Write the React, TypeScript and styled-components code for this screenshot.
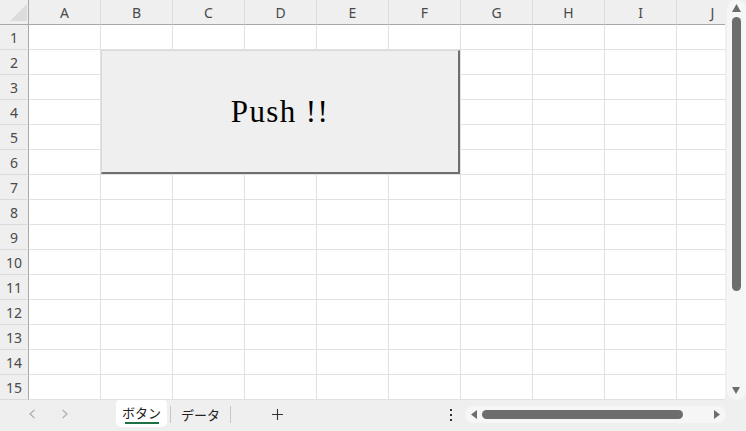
import React from "react";
import styled, { createGlobalStyle } from "styled-components";

const Global = createGlobalStyle`
  html, body { margin: 0; padding: 0; overflow: hidden; background: #efefef; }
  * { box-sizing: border-box; }
`;

const COLS = ["A", "B", "C", "D", "E", "F", "G", "H", "I", "J"];
const ROWS = Array.from({ length: 15 }, (_, i) => i + 1);

const Window = styled.div`
  width: 746px;
  height: 431px;
  display: flex;
  flex-direction: column;
  background: #efefef;
  font-family: "Noto Sans", "Open Sans", sans-serif;
  overflow: hidden;
`;

const Main = styled.div`
  display: flex;
  height: 400px;
`;

const Viewport = styled.div`
  position: relative;
  width: 725px;
  height: 400px;
  overflow: hidden;
  background: #ffffff;
`;

const Grid = styled.div`
  display: grid;
  grid-template-columns: 29px repeat(10, 72px);
  grid-template-rows: 25px repeat(15, 25px);
  width: 749px;
`;

const Corner = styled.div`
  background: #efefef;
  border-right: 1px solid #a8a8a8;
  border-bottom: 1px solid #a8a8a8;
  display: flex;
  align-items: flex-start;
  justify-content: flex-end;
`;

const ColHeader = styled.div`
  background: #efefef;
  border-right: 1px solid #dcdcdc;
  border-bottom: 1px solid #a8a8a8;
  color: #4a4a4a;
  font-size: 14px;
  display: flex;
  align-items: center;
  justify-content: center;
  padding-top: 1px;
`;

const RowHeader = styled.div`
  background: #efefef;
  border-right: 1px solid #a8a8a8;
  border-bottom: 1px solid #dadada;
  color: #4a4a4a;
  font-size: 14px;
  display: flex;
  align-items: center;
  justify-content: center;
  padding-top: 1px;
`;

const Cell = styled.div`
  background: #ffffff;
  border-right: 1px solid #e1e1e1;
  border-bottom: 1px solid #e1e1e1;
`;

const PushButton = styled.button`
  position: absolute;
  left: 101px;
  top: 50px;
  width: 359px;
  height: 124px;
  margin: 0;
  padding: 0;
  background: #efefef;
  border-top: 1px solid #dadada;
  border-left: 1px solid #dadada;
  border-right: 2px solid #6e6e6e;
  border-bottom: 2px solid #6e6e6e;
  font-family: "Liberation Serif", "Times New Roman", serif;
  font-size: 31px;
  letter-spacing: 1.4px;
  color: #000;
  display: flex;
  align-items: center;
  justify-content: center;
  cursor: pointer;
`;

const VScroll = styled.div`
  width: 21px;
  height: 400px;
  padding-left: 2px;
  display: flex;
`;

const VTrack = styled.div`
  width: 19px;
  height: 400px;
  background: #f6f6f6;
  border-radius: 9px;
  display: flex;
  flex-direction: column;
  align-items: center;
  padding-top: 4px;
  padding-right: 1px;
`;

const VThumb = styled.div`
  width: 9px;
  height: 274px;
  margin-top: 5px;
  background: #6d6d6d;
  border-radius: 5px;
`;

const Spacer = styled.div`
  flex: 1;
`;

const BottomArrow = styled.div`
  margin-bottom: 6px;
  display: flex;
`;

const RightArrow = styled.div`
  margin-right: 6px;
  display: flex;
`;

const Bar = styled.div`
  height: 31px;
  display: flex;
  align-items: flex-start;
  background: #efefef;
`;

const Nav = styled.div`
  width: 116px;
  height: 27px;
  display: flex;
  align-items: center;
  padding-left: 28px;
  gap: 25px;
`;

const ActiveTab = styled.div`
  width: 51px;
  height: 28px;
  margin-top: -1px;
  background: #ffffff;
  border-radius: 5px;
  display: flex;
  flex-direction: column;
  align-items: center;
  justify-content: flex-start;
  padding-top: 5px;
  font-family: "Noto Sans CJK JP", sans-serif;
  font-size: 13px;
  color: #222;
  line-height: 17px;
`;

const Underline = styled.div`
  width: 34px;
  height: 2px;
  margin-top: 1px;
  background: #1e7145;
`;

const Sep = styled.div<{ $ml?: number }>`
  width: 1px;
  height: 17px;
  margin-top: 6px;
  margin-left: ${(p) => p.$ml ?? 0}px;
  background: #c6c6c6;
`;

const Tab = styled.div`
  width: 59px;
  height: 27px;
  display: flex;
  align-items: center;
  justify-content: center;
  font-family: "Noto Sans CJK JP", sans-serif;
  font-size: 13px;
  color: #222;
  padding-top: 2px;
`;

const IconSlot = styled.div<{ $w: number; $ml: number }>`
  width: ${(p) => p.$w}px;
  margin-left: ${(p) => p.$ml}px;
  height: 31px;
  display: flex;
  align-items: center;
  justify-content: center;
  padding-bottom: 2px;
`;

const HTrack = styled.div`
  width: 261px;
  height: 17px;
  margin-top: 6px;
  margin-left: 11px;
  background: #f6f6f6;
  border-radius: 9px;
  display: flex;
  align-items: center;
  padding-left: 6px;
`;

const HThumb = styled.div`
  width: 201px;
  height: 9px;
  margin-left: 5px;
  background: #6d6d6d;
  border-radius: 5px;
`;

const Chevron = ({ dir }: { dir: "l" | "r" }) => (
  <svg width="8" height="10" viewBox="0 0 8 10">
    <path
      d={dir === "l" ? "M6.5 0.8 L2 5 L6.5 9.2" : "M1.5 0.8 L6 5 L1.5 9.2"}
      fill="none"
      stroke="#a6a6a6"
      strokeWidth="1.1"
    />
  </svg>
);

const Tri = ({ dir, w = 8, h = 8 }: { dir: "u" | "d" | "l" | "r"; w?: number; h?: number }) => {
  const pts: Record<string, string> = {
    u: `0,${h} ${w / 2},0 ${w},${h}`,
    d: `0,0 ${w},0 ${w / 2},${h}`,
    l: `${w},0 0,${h / 2} ${w},${h}`,
    r: `0,0 ${w},${h / 2} 0,${h}`,
  };
  return (
    <svg width={w} height={h} viewBox={`0 0 ${w} ${h}`}>
      <polygon points={pts[dir]} fill="#6d6d6d" />
    </svg>
  );
};

export default function App() {
  return (
    <Window>
      <Global />
      <Main>
        <Viewport>
          <Grid>
            <Corner>
              <svg width="26" height="24" viewBox="0 0 26 24">
                <polygon points="25,4 25,21 8,21" fill="#dcdcdc" />
              </svg>
            </Corner>
            {COLS.map((c) => (
              <ColHeader key={c}>{c}</ColHeader>
            ))}
            {ROWS.map((r) => (
              <React.Fragment key={r}>
                <RowHeader>{r}</RowHeader>
                {COLS.map((c) => (
                  <Cell key={c} />
                ))}
              </React.Fragment>
            ))}
          </Grid>
          <PushButton>Push !!</PushButton>
        </Viewport>
        <VScroll>
          <VTrack>
            <Tri dir="u" w={9} h={8} />
            <VThumb />
            <Spacer />
            <BottomArrow>
              <Tri dir="d" w={8} h={7} />
            </BottomArrow>
          </VTrack>
        </VScroll>
      </Main>
      <Bar>
        <Nav>
          <Chevron dir="l" />
          <Chevron dir="r" />
        </Nav>
        <ActiveTab>
          <span>ボタン</span>
          <Underline />
        </ActiveTab>
        <Sep $ml={3} />
        <Tab>データ</Tab>
        <Sep />
        <IconSlot $w={13} $ml={40}>
          <svg width="13" height="13" viewBox="0 0 13 13">
            <path d="M6.5 1 V12 M1 6.5 H12" stroke="#333" strokeWidth="1.1" fill="none" />
          </svg>
        </IconSlot>
        <IconSlot $w={6} $ml={164}>
          <svg width="4" height="12" viewBox="0 0 4 12">
            <rect x="1" y="0" width="2" height="2" fill="#333" />
            <rect x="1" y="5" width="2" height="2" fill="#333" />
            <rect x="1" y="10" width="2" height="2" fill="#333" />
          </svg>
        </IconSlot>
        <HTrack>
          <Tri dir="l" w={6} h={9} />
          <HThumb />
          <Spacer />
          <RightArrow>
            <Tri dir="r" w={6} h={9} />
          </RightArrow>
        </HTrack>
      </Bar>
    </Window>
  );
}
